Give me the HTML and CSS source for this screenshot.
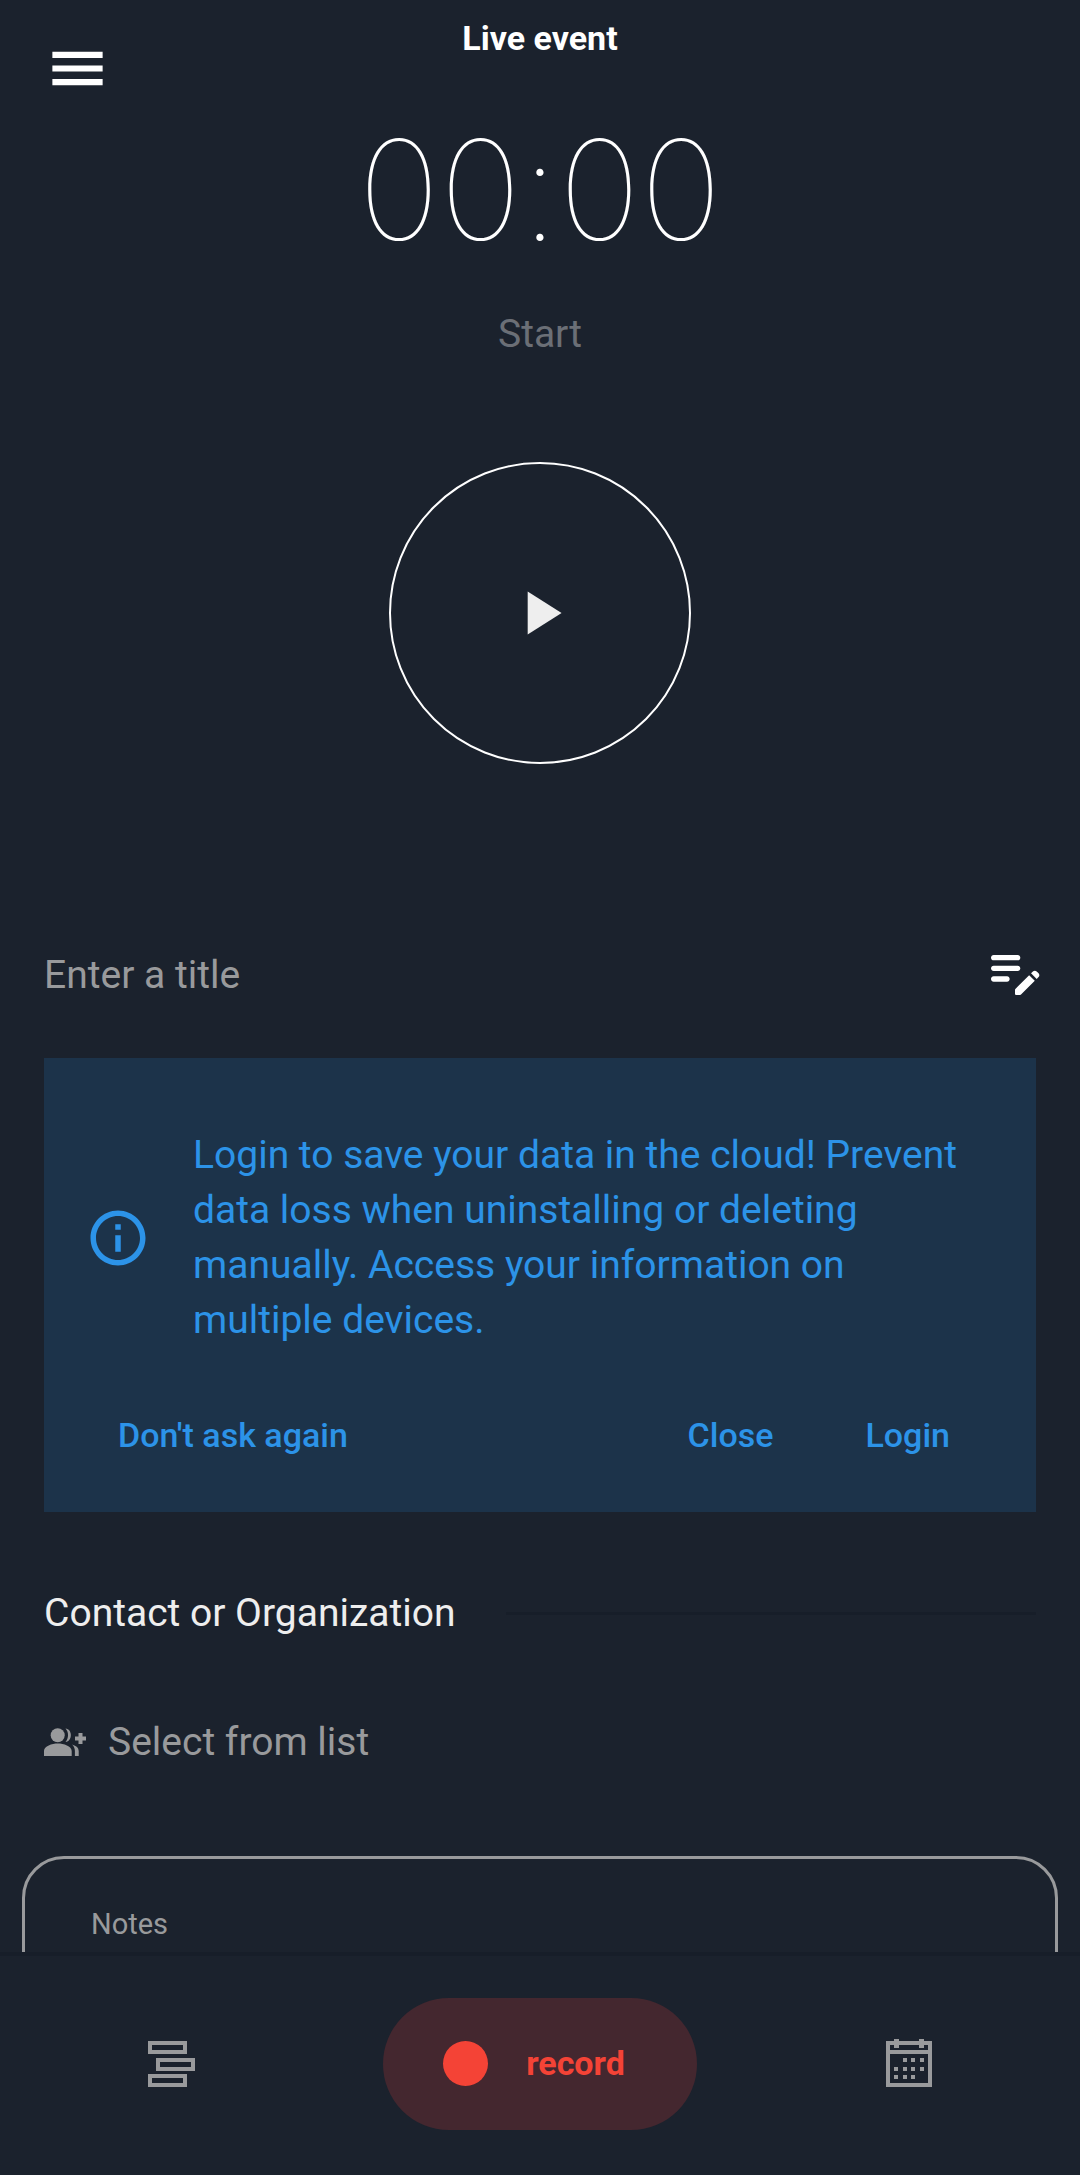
FILE: index.html
```html
<!DOCTYPE html>
<html lang="en">
<head>
<meta charset="utf-8">
<meta name="viewport" content="width=device-width, initial-scale=1">
<title>Live event</title>
<link rel="stylesheet" href="styles.css">
</head>
<body>
<div class="app">
  <header class="topbar">
    <button class="icon-button" type="button" aria-label="Menu">
      <svg class="icon-menu" viewBox="0 0 24 24" aria-hidden="true"><path d="M3 18h18v-2.2H3V18zm0-4.9h18v-2.2H3v2.2zM3 6v2.2h18V6H3z"/></svg>
    </button>
    <h1 class="title">Live event</h1>
  </header>

  <main class="content">
    <section class="timer">
      <time class="clock">00:00</time>
      <p class="timer-state">Start</p>
      <button class="play" type="button" aria-label="Start timer">
        <svg class="icon-play" viewBox="0 0 24 24" aria-hidden="true"><path d="M8 5v14l11-7z"/></svg>
      </button>
    </section>

    <div class="title-row">
      <input class="title-input" type="text" placeholder="Enter a title" aria-label="Title">
      <button class="icon-button" type="button" aria-label="Edit notes">
        <svg class="icon-edit" viewBox="0 1.500 24 24" aria-hidden="true"><path d="M14 11c0 .55-.45 1-1 1H4c-.55 0-1-.45-1-1s.45-1 1-1h9c.55 0 1 .45 1 1zM3 7c0 .55.45 1 1 1h9c.55 0 1-.45 1-1s-.45-1-1-1H4c-.55 0-1 .45-1 1zm7 8c0-.55-.45-1-1-1H4c-.55 0-1 .45-1 1s.45 1 1 1h5c.55 0 1-.45 1-1zm8.01-2.13l.71-.71c.39-.39 1.02-.39 1.41 0l.71.71c.39.39.39 1.02 0 1.41l-.71.71-2.12-2.12zm-.71.71l-5.16 5.16c-.09.09-.14.21-.14.35v1.41c0 .28.22.5.5.5h1.41c.13 0 .26-.05.35-.15l5.16-5.16-2.12-2.11z"/></svg>
      </button>
    </div>

    <section class="banner">
      <div class="banner-body">
        <svg class="icon-info" viewBox="0 0 24 24" aria-hidden="true"><path d="M11 7h2v2h-2zm0 4h2v6h-2zm1-9C6.480 2 2 6.480 2 12s4.480 10 10 10 10-4.480 10-10S17.520 2 12 2zm0 18c-4.410 0-8-3.590-8-8s3.590-8 8-8 8 3.590 8 8-3.590 8-8 8z"/></svg>
        <p class="banner-text">Login to save your data in the cloud! Prevent data loss when uninstalling or deleting manually. Access your information on multiple devices.</p>
      </div>
      <div class="banner-actions">
        <button class="text-button text-button-first" type="button">Don't ask again</button>
        <button class="text-button" type="button">Close</button>
        <button class="text-button" type="button">Login</button>
      </div>
    </section>

    <div class="section-head">
      <h2 class="section-title">Contact or Organization</h2>
      <hr class="section-rule">
    </div>

    <button class="select-row" type="button">
      <svg class="icon-people" viewBox="0 0 42 29" aria-hidden="true"><circle cx="13.700" cy="7.200" r="7"/><path d="M0 28v-5c0-5 8-7.600 13.800-7.600S27.700 18 27.700 23v5zM21.500.5c6.800.3 7.600 12.700 0 13.400 3.400-3.600 3.400-9.800 0-13.400zM28 16.500c4.500 1.300 6.700 3.400 6.700 6.500v5h-3.800v-5c0-2.600-1-4.800-2.900-6.500zM34.500 5h4v3.500H42v4h-3.500V16h-4v-3.500H31v-4h3.500z"/></svg>
      <span>Select from list</span>
    </button>

    <div class="notes">
      <label class="notes-label" for="notes">Notes</label>
      <textarea class="notes-input" id="notes"></textarea>
    </div>
  </main>

  <nav class="bottombar">
    <button class="nav-button" type="button" aria-label="Timeline">
      <svg class="icon-nav" viewBox="0 0 48 48" aria-hidden="true"><path fill-rule="evenodd" d="M0 1h39v13H0zM4 5v5h31V5zM8 18h39v13H8zm4 4v5h31v-5zM0 34h39v13H0zm4 4v5h31v-5z"/></svg>
    </button>
    <button class="record" type="button"><span class="record-dot"></span>record</button>
    <button class="nav-button" type="button" aria-label="Calendar">
      <svg class="icon-nav" viewBox="-2 0 48 48" aria-hidden="true"><path fill-rule="evenodd" d="M0 1h46v46H0zM4 5v5h38V5zM4 14v29h38V14z"/><path d="M8 -1h5v9H8zm25 0h5v9h-5zM17 18h4v4h-4zm8 0h4v4h-4zm9 0h4v4h-4zM8 27h4v4H8zm9 0h4v4h-4zm8 0h4v4h-4zm9 0h4v4h-4zM8 35h4v4H8zm9 0h4v4h-4zm8 0h4v4h-4z"/></svg>
    </button>
  </nav>
</div>
</body>
</html>
```

FILE: styles.css
```css
:root {
  --bg: #1b222d;
  --line: #171e29;
  --text: #eeeeee;
  --muted: #999a9c;
  --blue: #2c93e8;
  --red: #f44336;
}

* {
  box-sizing: border-box;
}

body {
  margin: 0;
  background: var(--bg);
  color: var(--text);
  font-family: Roboto, "Liberation Sans", sans-serif;
  font-size: 39px;
  line-height: 55px;
}

h1,
h2,
p {
  margin: 0;
}

button,
input,
textarea {
  margin: 0;
  padding: 0;
  border: 0;
  background: none;
  color: inherit;
  font: inherit;
}

button {
  cursor: pointer;
}

svg {
  display: block;
  fill: currentColor;
  overflow: visible;
}

.app {
  display: flex;
  flex-direction: column;
  height: 100vh;
}

/* Top bar */
.topbar {
  display: grid;
  grid-template-columns: 68px 1fr 68px;
  flex: none;
  padding: 0 44px;
  color: #ffffff;
}

.topbar .icon-button {
  margin-top: 35px;
}

.title {
  padding-top: 18px;
  font-size: 34px;
  font-weight: 700;
  line-height: 40px;
  text-align: center;
}

.icon-menu {
  width: 67px;
  height: 67px;
}

/* Scrolling content */
.content {
  flex: 1;
  min-height: 0;
  overflow-x: hidden;
  overflow-y: auto;
  scrollbar-width: none;
}

.timer {
  display: flex;
  flex-direction: column;
  align-items: center;
  padding-top: 38px;
}

.clock {
  color: #ffffff;
  font-family: Inter, Roboto, sans-serif;
  font-size: 138px;
  font-weight: 100;
  font-optical-sizing: none;
  font-feature-settings: "calt" 0;
  line-height: 100px;
}

.timer-state {
  margin-top: 67px;
  color: #6b6f76;
}

.play {
  display: grid;
  place-items: center;
  width: 302px;
  height: 302px;
  margin-top: 100px;
  border: 2px solid #ffffff;
  border-radius: 50%;
}

.icon-play {
  width: 74px;
  height: 74px;
}

.title-row {
  display: flex;
  align-items: center;
  justify-content: space-between;
  margin-top: 177px;
  padding: 0 33px 0 44px;
}

.title-input {
  flex: 1;
  min-width: 0;
  height: 68px;
}

.title-input::placeholder {
  color: var(--muted);
  opacity: 1;
}

.icon-edit {
  width: 64px;
  height: 64px;
  color: #ffffff;
}

/* Login banner */
.banner {
  margin: 49px 44px 0;
  padding-bottom: 28px;
  background: #1c334a;
  color: var(--blue);
}

.banner-body {
  display: flex;
  align-items: center;
  gap: 42px;
  padding: 70px 44px 38px 41px;
}

.banner-text {
  flex: 1;
}

.icon-info {
  flex: none;
  width: 66px;
  height: 66px;
}

.banner-actions {
  display: flex;
  gap: 4px;
  padding: 0 42px 0 30px;
}

.text-button {
  height: 98px;
  padding: 0 44px;
  font-size: 34px;
  font-weight: 500;
}

.text-button-first {
  margin-right: auto;
}

/* Contact */
.section-head {
  display: flex;
  align-items: center;
  gap: 50px;
  margin: 74px 44px 0;
}

.section-title {
  font-size: 39px;
  font-weight: 400;
}

.section-rule {
  flex: 1;
  height: 3px;
  margin: 0;
  border: 0;
  background: var(--line);
}

.select-row {
  display: flex;
  align-items: center;
  gap: 22px;
  margin: 74px 44px 0;
  color: var(--muted);
}

.icon-people {
  width: 42px;
  height: 29px;
}

/* Notes */
.notes {
  margin: 86px 22px 44px;
  padding: 49px 44px 44px 66px;
  border: 3px solid var(--muted);
  border-radius: 42px;
}

.notes-label {
  display: block;
  color: var(--muted);
  font-size: 29px;
  line-height: 32px;
}

.notes-input {
  display: block;
  width: 100%;
  height: 220px;
  resize: none;
}

/* Bottom bar */
.bottombar {
  display: grid;
  grid-template-columns: 1fr auto 1fr;
  align-items: center;
  column-gap: 40px;
  flex: none;
  height: 223px;
  padding-bottom: 4px;
  border-top: 4px solid var(--line);
}

.nav-button {
  justify-self: center;
  color: var(--muted);
}

.icon-nav {
  width: 48px;
  height: 48px;
}

.record {
  display: flex;
  align-items: center;
  gap: 38px;
  height: 132px;
  padding: 0 72px 0 60px;
  border-radius: 66px;
  background: #44272f;
  color: var(--red);
  font-size: 34px;
  font-weight: 700;
}

.record-dot {
  width: 45px;
  height: 45px;
  border-radius: 50%;
  background: var(--red);
}
```
